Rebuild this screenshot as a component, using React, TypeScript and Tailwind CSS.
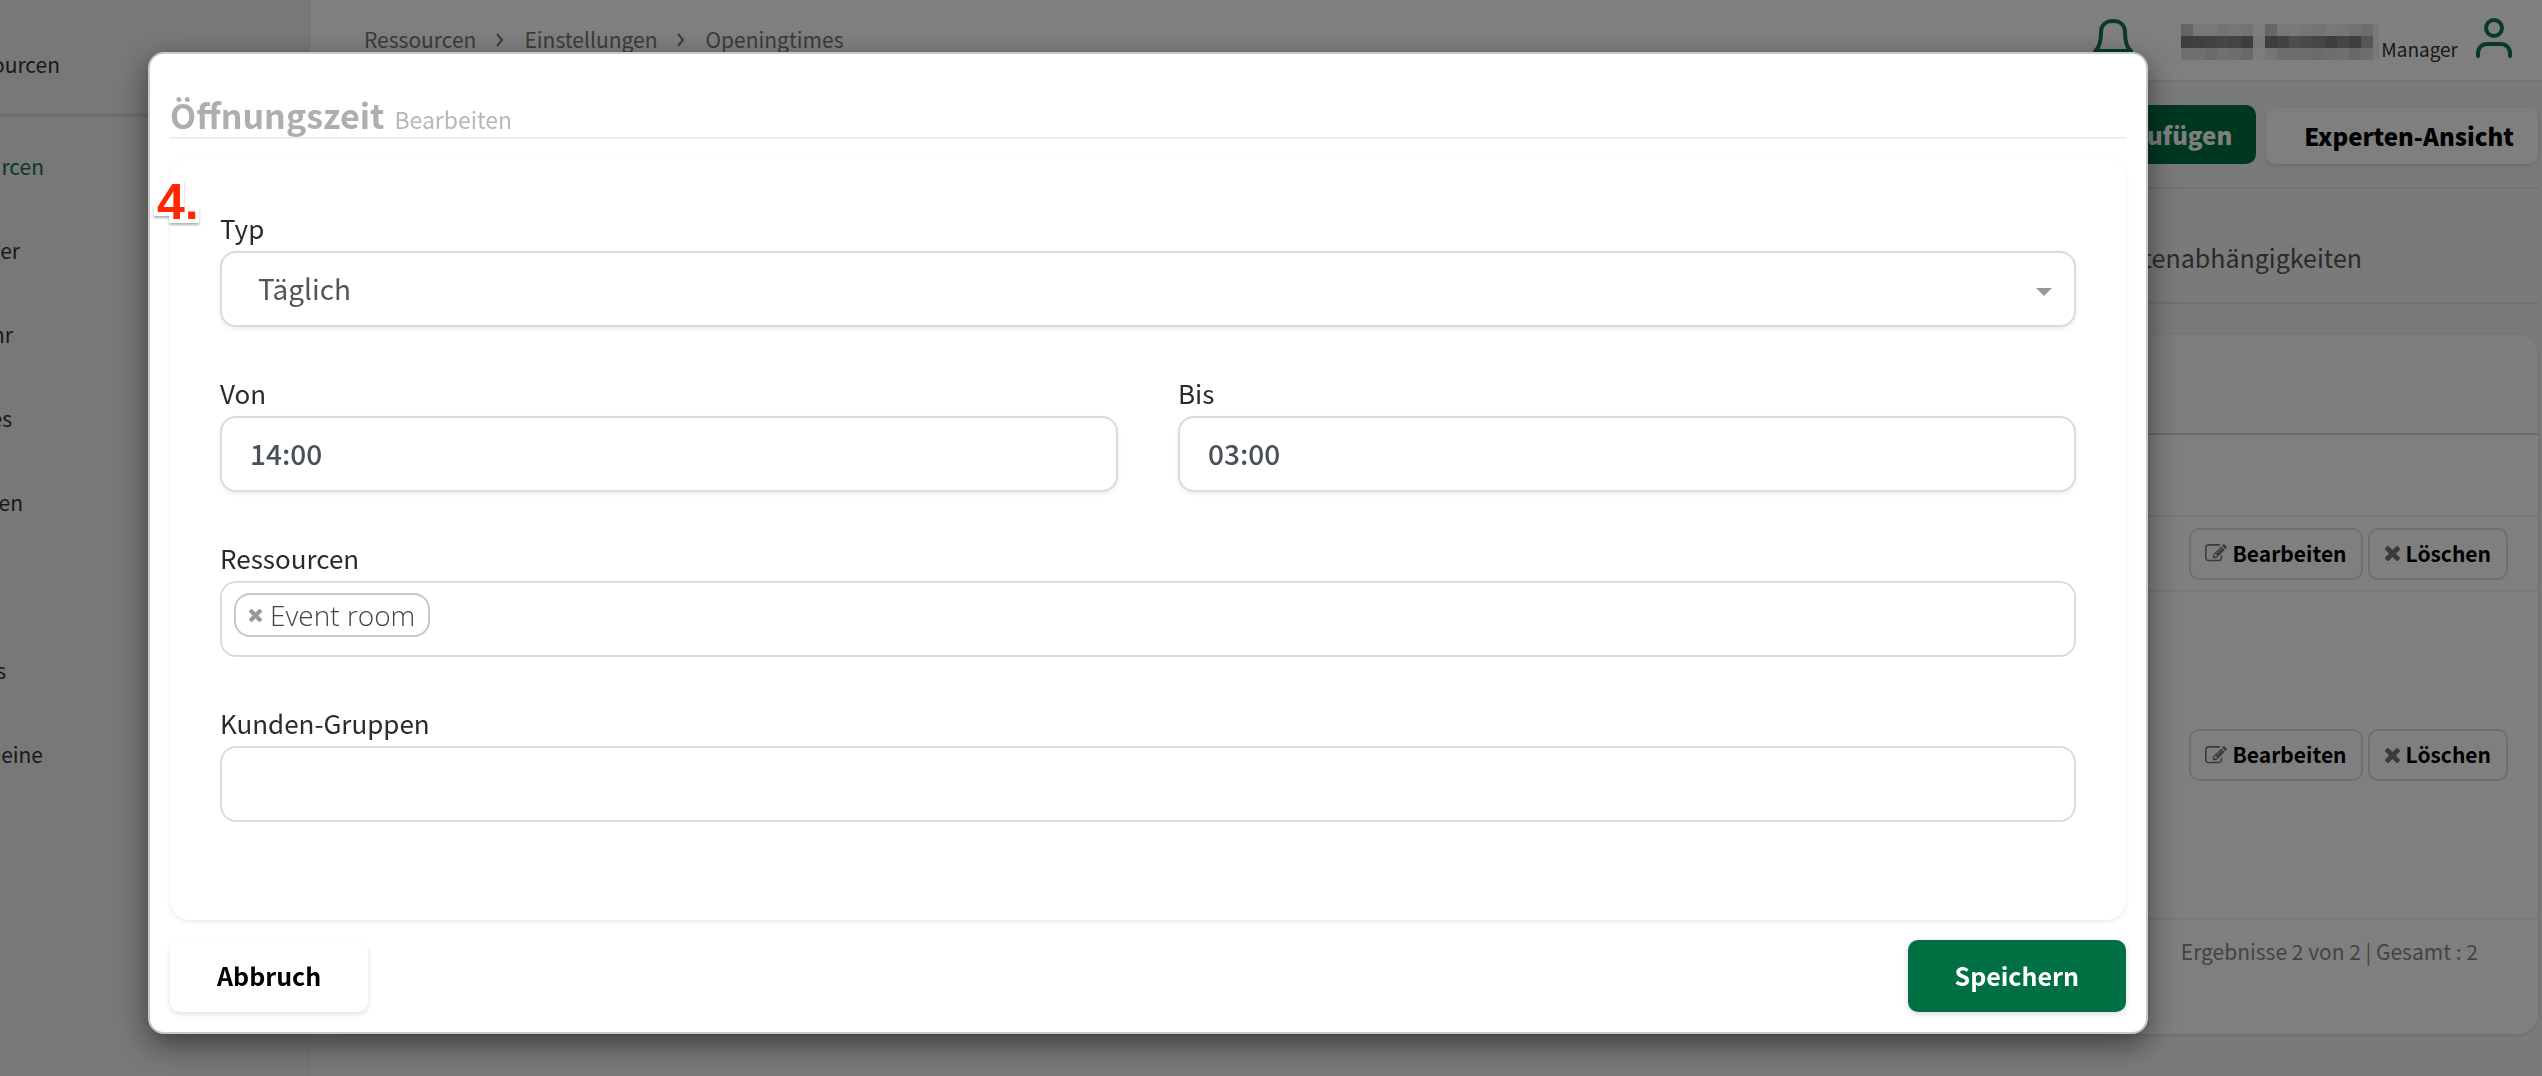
import React from "react";

const navItems = [
  { label: "rcen", width: "w-[44px]", active: true },
  { label: "er", width: "w-[20px]" },
  { label: "hr", width: "w-[13px]" },
  { label: "es", width: "w-[12px]" },
  { label: "en", width: "w-[23px]" },
  { label: "", width: "w-0" },
  { label: "s", width: "w-[6px]" },
  { label: "eine", width: "w-[43px]" },
];

const maskRows = [
  ["#cacaca", "#f0f0f0", "#f0f0f0", "#e6e6e6", "#eeeeee", "#e6e6e6", "#fafafa", "#cccccc", "#f0f0f0", "#f2f2f2", "#ececec", "#e6e6e6", "#f0f0f0", "#ececec", "#e4e4e4", "#d8d8d8"],
  ["#7c7c7c", "#808080", "#848484", "#8c8c8c", "#888888", "#7c7c7c", "#f0f0f0", "#7c7c7c", "#868686", "#9c9c9c", "#949494", "#8c8c8c", "#7c7c7c", "#8c8c8c", "#7c7c7c", "#acacac"],
  ["#e0e0e0", "#e0e0e0", "#d6d6d6", "#e0e0e0", "#dcdcdc", "#d2d2d2", "#fafafa", "#ececec", "#dadada", "#dadada", "#dadada", "#d6d6d6", "#dcdcdc", "#e0e0e0", "#d2d2d2", "#dadada"],
];

function MaskedName() {
  return (
    <svg className="mt-1" width="204" height="44" viewBox="0 0 204 44" aria-hidden="true">
      <rect width="204" height="44" fill="#ffffff" fillOpacity="0.5" />
      {maskRows.map((row, y) =>
        row.map((fill, x) => (
          <rect key={`${x}-${y}`} x={4 + x * 12} y={4 + y * 12} width="12" height="12" fill={fill} />
        )),
      )}
      <rect x="196" y="4" width="6" height="36" fill="#f2f2f2" />
    </svg>
  );
}

function BellIcon() {
  return (
    <svg width="48" height="52" viewBox="0 0 48 52" fill="none" stroke="#14744a" strokeWidth="4" strokeLinecap="round" strokeLinejoin="round" aria-hidden="true">
      <path d="M12 18C12 11 17 7 24 7s12 4 12 11c0 10 2 16 6 19H6C10 34 12 28 12 18Z" />
      <path d="M20 43a4.500 4.500 0 0 0 8 0" />
    </svg>
  );
}

function UserIcon() {
  return (
    <svg width="40" height="44" viewBox="0 0 40 44" fill="none" stroke="#14744a" strokeWidth="4" strokeLinecap="round" aria-hidden="true">
      <circle cx="20" cy="12" r="8" />
      <path d="M4 40v-3a9 9 0 0 1 9-9h14a9 9 0 0 1 9 9v3" />
    </svg>
  );
}

function Chevron() {
  return (
    <svg width="10" height="14" viewBox="0 0 10 14" fill="none" stroke="#777777" strokeWidth="2" aria-hidden="true">
      <path d="M2 1l5 6-5 6" />
    </svg>
  );
}

function EditIcon() {
  return (
    <svg width="22" height="19" viewBox="0 0 1792 1536" fill="#777777" aria-hidden="true">
      <path d="M888 1056l116-116-152-152-116 116v56h96v96h56zm440-720q-16-16-33 1L945 687q-17 17-1 33t33-1l350-350q17-17 1-33zm80 594v190q0 119-84.500 203.500T1120 1408H288q-119 0-203.500-84.500T0 1120V288Q0 169 84.500 84.500T288 0h832q63 0 117 25 15 7 18 23 3 17-9 29l-49 49q-14 14-32 8-23-6-45-6H288q-66 0-113 47t-47 113v832q0 66 47 113t113 47h832q66 0 113-47t47-113V994q0-13 9-22l64-64q15-15 35-7t20 29zm-96-738l288 288-672 672H640V864zm444 132l-92 92-288-288 92-92q28-28 68-28t68 28l152 152q28 28 28 68t-28 68z" />
    </svg>
  );
}

function CrossIcon({ size, fill }: { size: number; fill: string }) {
  return (
    <svg width={size} height={size} viewBox="110 258 1188 1188" fill={fill} aria-hidden="true">
      <path d="M1298 1214q0 40-28 68l-136 136q-28 28-68 28t-68-28l-294-294-294 294q-28 28-68 28t-68-28l-136-136q-28-28-28-68t28-68l294-294-294-294q-28-28-28-68t28-68l136-136q28-28 68-28t68 28l294 294 294-294q28-28 68-28t68 28l136 136q28 28 28 68t-28 68l-294 294 294 294q28 28 28 68z" />
    </svg>
  );
}

function RowActions() {
  const cls = "flex h-[52px] items-center gap-1.5 rounded-[10px] border-2 border-[#dddddd] bg-white text-[21px] font-bold text-black";
  return (
    <div className="flex justify-end gap-[5px]">
      <button type="button" className={`${cls} px-3.5`}>
        <EditIcon />
        Bearbeiten
      </button>
      <button type="button" className={`${cls} px-[15px]`}>
        <CrossIcon size={15} fill="#777777" />
        Löschen
      </button>
    </div>
  );
}

const labelCls = "mb-2 block h-[30px] text-[26px] leading-[30px] text-[#2b2b2b]";
const boxCls = "h-[76px] w-full rounded-[16px] border-2 border-[#dbdbdb] bg-white";

function EditDialog() {
  return (
    <div role="dialog" aria-labelledby="dialog-title" className="rounded-[16px] border-2 border-[#c9c9c9] bg-white px-5 pb-5 shadow-[0_10px_30px_rgba(0,0,0,0.5)]">
      <h1 id="dialog-title" className="mb-[19px] flex h-[85px] items-baseline gap-2.5 border-b-2 border-[#eeeeee] pt-[38px] leading-[46px]">
        <span className="text-[34px] font-bold text-[#aeaeae]">Öffnungszeit</span>
        <small className="text-[23px] font-normal text-[#b8b8b8]">Bearbeiten</small>
      </h1>
      <form>
        <div className="relative grid grid-cols-2 gap-x-[60px] gap-y-[51px] rounded-[20px] bg-white px-[50px] pt-[55px] pb-[98px] shadow-[0_2px_4px_rgba(0,0,0,0.08)]">
          <span className="absolute top-4 -left-[13px] font-['Liberation_Sans',sans-serif] text-[50px] leading-[56px] font-bold text-[#ff2600] drop-shadow-[0_2px_1px_rgba(0,0,0,0.3)] [paint-order:stroke_fill] [-webkit-text-stroke:8px_#ffffff]">
            4.
          </span>
          <div className="col-span-2">
            <label htmlFor="typ" className={labelCls}>Typ</label>
            <div className="relative">
              <select id="typ" defaultValue="Täglich" className={`${boxCls} appearance-none px-9 pb-0.5 text-[28px] text-[#555555] shadow-[0_2px_4px_rgba(0,0,0,0.08)]`}>
                <option>Täglich</option>
              </select>
              <svg className="pointer-events-none absolute top-[37px] right-6" width="16" height="8" viewBox="0 0 16 8" aria-hidden="true">
                <path d="M0 0h16L8 8z" fill="#999999" />
              </svg>
            </div>
          </div>
          <div>
            <label htmlFor="von" className={labelCls}>Von</label>
            <input id="von" type="text" defaultValue="14:00" className={`${boxCls} px-7 pb-0.5 text-[28px] font-medium text-[#495057] shadow-[0_2px_4px_rgba(0,0,0,0.08)]`} />
          </div>
          <div>
            <label htmlFor="bis" className={labelCls}>Bis</label>
            <input id="bis" type="text" defaultValue="03:00" className={`${boxCls} px-7 pb-0.5 text-[28px] font-medium text-[#495057] shadow-[0_2px_4px_rgba(0,0,0,0.08)]`} />
          </div>
          <div className="col-span-2">
            <label htmlFor="ressourcen" className={labelCls}>Ressourcen</label>
            <div className={`${boxCls} flex items-start gap-2 px-3 pt-2.5`}>
              <span className="flex h-11 items-center gap-2 rounded-[16px] border-2 border-[#c8c8c8] px-[13px] font-['Open_Sans',sans-serif] text-[28px] leading-10 font-light text-[#444444]">
                <button type="button" aria-label="Event room entfernen">
                  <CrossIcon size={13} fill="#999999" />
                </button>
                Event room
              </span>
              <input id="ressourcen" type="text" className="h-11 min-w-0 flex-1 outline-none" />
            </div>
          </div>
          <div className="col-span-2">
            <label htmlFor="gruppen" className={labelCls}>Kunden-Gruppen</label>
            <input id="gruppen" type="text" className={`${boxCls} px-7 text-[28px]`} />
          </div>
        </div>
        <div className="mt-5 flex justify-between">
          <button type="button" className="h-[72px] rounded-[10px] bg-white px-[47px] text-[25px] font-bold text-black shadow-[0_2px_5px_rgba(0,0,0,0.13)]">Abbruch</button>
          <button type="submit" className="h-[72px] rounded-[10px] bg-[#006f42] px-[47px] text-[25px] font-bold text-white shadow-[0_2px_6px_rgba(0,0,0,0.15)]">Speichern</button>
        </div>
      </form>
    </div>
  );
}

export default function App() {
  return (
    <div className="relative flex min-h-screen overflow-hidden bg-[#f4f4f4] font-['Noto_Sans_CJK_SC',sans-serif]">
      <aside className="w-[310px] shrink-0 border-r-2 border-[#ececec] bg-[#f0f0f0] text-[21px] text-[#333333]">
        <div className="flex h-[117px] items-center border-b-4 border-[#dcdcdc] pt-4">
          <a href="#ressourcen-home" className="flex w-[60px] justify-end whitespace-nowrap">ourcen</a>
        </div>
        <nav className="flex flex-col pt-2">
          {navItems.map((item, i) => (
            <a key={i} href="#nav" className={`flex h-[84px] items-center justify-end whitespace-nowrap ${item.width} ${item.active ? "text-[#14744a]" : ""}`}>
              {item.label}
            </a>
          ))}
        </nav>
      </aside>
      <div className="min-w-0 flex-1">
        <header className="flex h-[82px] items-center justify-between border-b-2 border-[#e6e6e6] bg-white pr-7 pl-[54px]">
          <nav className="flex items-center gap-[19px] text-[21px] text-[#777777]">
            <a href="#r">Ressourcen</a>
            <Chevron />
            <a href="#e">Einstellungen</a>
            <Chevron />
            <a href="#o">Openingtimes</a>
          </nav>
          <div className="flex items-center">
            <button type="button" aria-label="Benachrichtigungen" className="mr-10"><BellIcon /></button>
            <MaskedName />
            <span className="mt-[18px] text-[19px] text-[#333333]">Manager</span>
            <button type="button" aria-label="Profil" className="mb-1 ml-4"><UserIcon /></button>
          </div>
        </header>
        <main className="pr-1 pl-5">
          <div className="flex h-[107px] items-center justify-end gap-2.5 border-b-2 border-[#e2e2e2]">
            <button type="button" className="h-[59px] rounded-[10px] bg-[#006f42] px-6 text-[24px] font-black text-white">Hinzufügen</button>
            <button type="button" className="mt-0.5 h-14 rounded-[10px] bg-white pr-6 pl-[38px] text-[24px] font-black text-black shadow-[0_2px_4px_rgba(0,0,0,0.12)]">Experten-Ansicht</button>
          </div>
          <div className="flex h-[115px] items-center justify-end border-b-2 border-[#e2e2e2] pt-6 pr-44 text-[25px] text-[#555555]">
            <a href="#tab">Datenabhängigkeiten</a>
          </div>
          <section className="mt-[31px] rounded-[20px] bg-white pb-16 shadow-[0_1px_4px_rgba(0,0,0,0.13)]">
            <table className="w-full">
              <thead>
                <tr className="h-[99px] border-b-2 border-[#d4d4d4]"><th className="rounded-t-[20px] bg-[#fafafa]" /></tr>
              </thead>
              <tbody>
                <tr className="h-[82px] border-b-2 border-[#ececf6]"><td /></tr>
                <tr className="h-[75px] border-b-2 border-[#ececf6]"><td className="pr-[30px]"><RowActions /></td></tr>
                <tr className="h-[328px] border-b-2 border-[#ececf6]"><td className="pr-[30px]"><RowActions /></td></tr>
              </tbody>
            </table>
            <p className="pt-3 pr-[60px] text-right text-[21px] leading-[38px] text-[#888888]">Ergebnisse 2 von 2 | Gesamt : 2</p>
          </section>
        </main>
      </div>
      <div className="fixed inset-0 bg-black/50 pt-[52px] pr-[394px] pl-[148px]">
        <EditDialog />
      </div>
    </div>
  );
}
